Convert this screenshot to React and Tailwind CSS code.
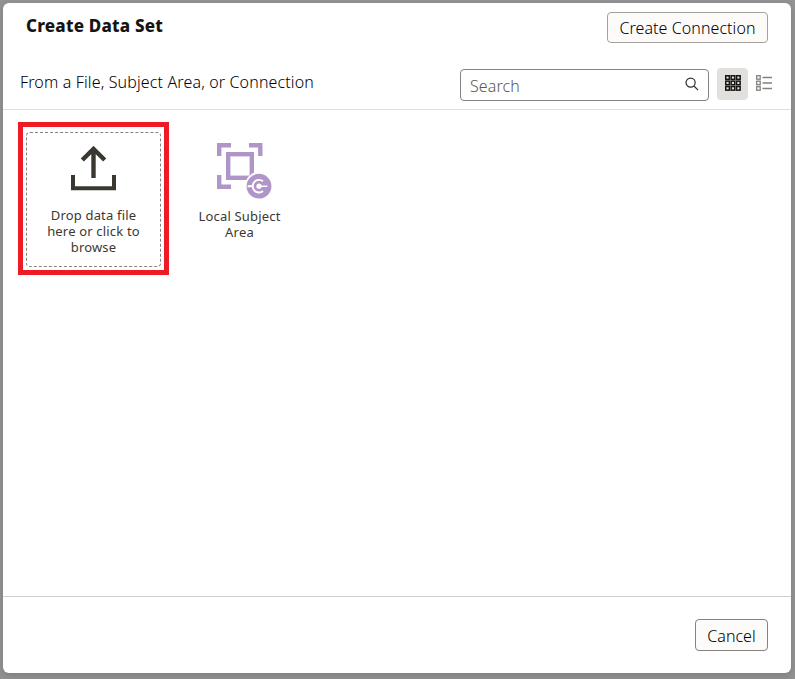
function UploadIcon() {
  return (
    <svg width="46" height="46" viewBox="0 0 46 46" fill="none" stroke="#3b3832" strokeWidth="4">
      <path d="M2 29v13.2h41V29" />
      <path d="M22.5 32V3M11.3 14L22.5 2.9l11.2 11.1" strokeWidth="4.4" />
    </svg>
  );
}

function SubjectAreaIcon() {
  return (
    <svg width="56" height="58" viewBox="0 0 56 58" fill="none" stroke="#b095c9" strokeWidth="4.4">
      <path d="M2.2 14V3.2H14M32 3.2h11.3V14M2.2 33v11.8H14" />
      <rect x="11.2" y="12.2" width="23.6" height="23.6" />
      <circle cx="42" cy="44.2" r="14.2" fill="#fff" stroke="none" />
      <circle cx="42" cy="44.2" r="12.4" fill="#b095c9" stroke="none" />
      <g stroke="#fff" strokeWidth="1.9">
        <path d="M46 39.3A6.3 6.3 0 1 0 46 49.1M30.6 44.2h5" />
        <circle cx="42" cy="44.2" r="2.6" fill="#fff" stroke="none" />
        <path d="M43 44.2h7.4" strokeWidth="1.5" />
      </g>
    </svg>
  );
}

function GridIcon() {
  return (
    <svg width="16" height="16" viewBox="0 0 16 16" fill="none" stroke="#161513" strokeWidth="1.5">
      {[0, 5.4, 10.8].map((y) =>
        [0, 5.4, 10.8].map((x) => <rect key={`${x}-${y}`} x={x + 0.75} y={y + 0.75} width="3.6" height="3.6" />)
      )}
    </svg>
  );
}

function ListIcon() {
  return (
    <svg width="16" height="16" viewBox="0 0 16 16" fill="none" stroke="#85827d" strokeWidth="1.3">
      {[0, 5.5, 11].map((y) => (
        <g key={y}>
          <rect x="0.7" y={y + 0.7} width="3.5" height="3.5" />
          <path d={`M6.5 ${y + 2.5}H16`} strokeWidth="1.6" />
        </g>
      ))}
    </svg>
  );
}

export default function App() {
  return (
    <div className="h-[679px] w-[795px] overflow-hidden bg-[#939393] pt-[3px] pl-[3px] font-['Noto_Sans',sans-serif] font-light text-black">
      <main className="flex h-[670px] w-[788px] flex-col overflow-hidden rounded-md bg-white shadow-[0_3px_8px_rgba(0,0,0,0.15)]">
        <header className="flex h-[57px] items-start justify-between pt-[9px] pr-[23px] pl-[23px]">
          <h1 className="mt-px text-[17px] leading-[26px] font-extrabold tracking-[0.2px] whitespace-nowrap text-[#161513]">Create Data Set</h1>
          <button className="h-[31px] w-[161px] rounded border border-[#a5a19d] bg-[#fcfbfa] text-[16px] leading-[31px] tracking-[0.07px] whitespace-nowrap">
            Create Connection
          </button>
        </header>
        <div className="flex h-[50px] shrink-0 items-start border-b border-[#dfdfdf] pl-[17px]">
          <p className="mt-[10px] w-[440px] text-[16px] leading-6 tracking-[0.14px] whitespace-nowrap">
            From a File, Subject Area, or Connection
          </p>
          <div className="mt-[9px] flex h-8 w-[249px] items-start justify-between rounded border border-[#85827f] pr-[9px] pl-[9px]">
            <span className="text-[16px] leading-8 tracking-[0.1px] text-[#5b5853]">Search</span>
            <svg className="mt-[7px]" width="14" height="14" viewBox="0 0 15 15" fill="none" stroke="#302e2b" strokeWidth="1.3">
              <circle cx="6" cy="6" r="4.9" />
              <path d="M9.6 9.6L14 14" />
            </svg>
          </div>
          <div className="mt-2 ml-2 flex h-8 w-[31px] items-start justify-center rounded bg-[#e2e0dc] pt-[7px]">
            <GridIcon />
          </div>
          <div className="mt-[15px] ml-2">
            <ListIcon />
          </div>
        </div>
        <section className="flex flex-1 items-start pt-[12px] pl-[15px] text-center text-[13px] leading-4 font-normal tracking-[0.18px] text-[#3b3832]">
          <div className="h-[153px] w-[151px] border-[5px] border-[#ed1c24] pt-[5px] pl-[3px]">
            <div className="flex h-[135px] w-[135px] flex-col items-center rounded border border-dashed border-[#85827f] pt-[13px]">
              <UploadIcon />
              <p className="mt-[15px] whitespace-nowrap">
                Drop data file
                <br />
                here or click to
                <br />
                browse
              </p>
            </div>
          </div>
          <div className="flex w-[141px] flex-col items-center pt-[20px]">
            <div className="ml-[10px]">
              <SubjectAreaIcon />
            </div>
            <p className="mt-[8px] whitespace-nowrap">
              Local Subject
              <br />
              Area
            </p>
          </div>
        </section>
        <footer className="flex h-[77px] shrink-0 items-start justify-end border-t border-[#d4cfca] pt-[22px] pr-[23px]">
          <button className="h-8 w-[73px] rounded border border-[#85827f] bg-[#fcfbfa] text-[16px] leading-[32px]">
            Cancel
          </button>
        </footer>
      </main>
    </div>
  );
}
